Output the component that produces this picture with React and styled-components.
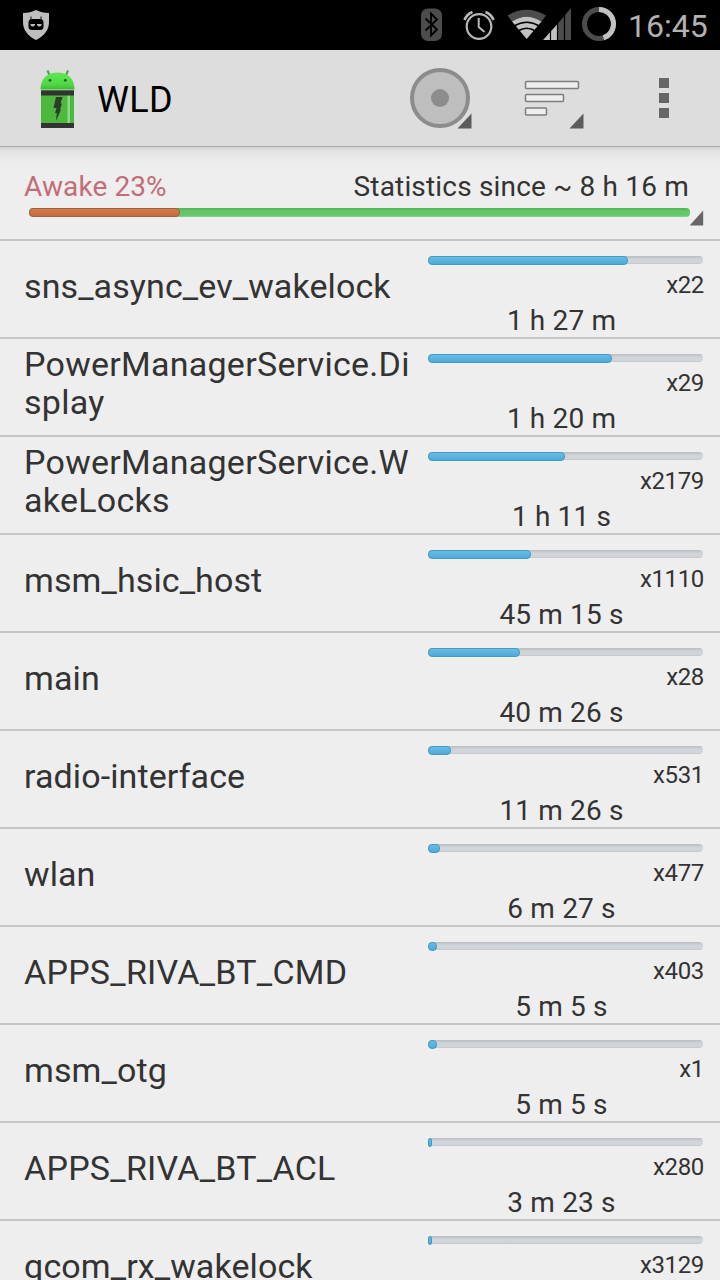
import styled, { createGlobalStyle } from "styled-components";

const GlobalStyle = createGlobalStyle`
  * {
    box-sizing: border-box;
  }

  body {
    margin: 0;
    background: #eee;
    font-family: Roboto, "Noto Sans", sans-serif;
    color: #333;
    overflow: hidden;
  }

  svg {
    display: block;
  }
`;

const Screen = styled.div`
  display: flex;
  flex-direction: column;
  width: 720px;
  height: 1280px;
  overflow: hidden;
`;

const StatusBar = styled.div`
  display: flex;
  align-items: center;
  justify-content: space-between;
  flex: none;
  height: 50px;
  padding: 0 12px 0 22px;
  background: #000;
`;

const StatusIcons = styled.div`
  display: flex;
  align-items: center;
`;

const Clock = styled.span`
  width: 80px;
  margin-left: 10px;
  font-size: 32px;
  line-height: 50px;
  padding-top: 2px;
  white-space: nowrap;
  color: #b2b2b2;
`;

const ActionBar = styled.header`
  display: flex;
  align-items: center;
  flex: none;
  height: 97px;
  padding-left: 40px;
  background: #ddd;
  border-bottom: 1px solid #aaa;
`;

const Title = styled.h1`
  flex: 1;
  margin: 0 0 0 22px;
  padding-top: 4px;
  font-size: 36px;
  font-weight: 400;
  letter-spacing: 0.3px;
  color: #000;
`;

const ActionButton = styled.button`
  width: 112px;
  height: 96px;
  padding: 0;
  border: none;
  background: none;
`;

const Summary = styled.section`
  flex: none;
  height: 94px;
  padding: 22px 16px 0 24px;
  border-bottom: 2px solid #c6c6c6;
  background: linear-gradient(#d2d2d2, #e4e4e4 4px, #eee 18px);
`;

const SummaryText = styled.div`
  display: flex;
  justify-content: space-between;
  padding-right: 15px;
  font-size: 28px;
  line-height: 36px;
  letter-spacing: 0.18px;
`;

const Awake = styled.span`
  letter-spacing: 0.1px;
  color: #c26d78;
`;

const SummaryProgress = styled.div`
  display: flex;
  padding-left: 5px;
`;

const SummaryTrack = styled.div`
  width: 662px;
  height: 9px;
  margin-top: 3px;
  border-radius: 4px;
  background: linear-gradient(#50b455, #66c66a 35%, #66c66a 80%, #8fd292);
`;

const Fill = styled.div`
  height: 100%;
  border-radius: 4px;
`;

const AwakeFill = styled(Fill)`
  border: 1px solid #a0623a;
  background: linear-gradient(#d07c50, #cf7145 60%, #c26a40);
`;

const Row = styled.li`
  display: grid;
  grid-template-columns: 396px 284px;
  height: 98px;
  padding-left: 24px;
  border-bottom: 2px solid #c6c6c6;
`;

const List = styled.ul`
  margin: 0;
  padding: 0;
  list-style: none;
`;

const Name = styled.div`
  align-self: center;
  margin-bottom: ${(props) => (props.$wrapped ? "8px" : "6px")};
  font-size: 34px;
  line-height: 38px;
  letter-spacing: ${(props) => (props.$capitals ? "0.26px" : "0.1px")};
  word-break: break-all;
`;

const Usage = styled.div`
  padding-top: 15px;
`;

const Track = styled.div`
  width: 275px;
  height: 8px;
  margin-left: 8px;
  border-radius: 4px;
  background: linear-gradient(#b9bdc1, #d0d5da 40%, #d0d5da 80%, #c2c5c8);
`;

const UsageFill = styled(Fill)`
  height: 9px;
  border: 1px solid #3d9cc8;
  background: linear-gradient(#6dbbe2, #5cb3df 50%, #4ea9d7);
`;

const Count = styled.div`
  height: 41px;
  font-size: 24px;
  line-height: 42px;
  letter-spacing: -0.35px;
  text-align: right;
`;

const Duration = styled.div`
  padding-right: 1px;
  font-size: 28px;
  line-height: 32px;
  letter-spacing: 0.15px;
  text-align: center;
`;

const LINE_CHARS = 22;

const wakelocks = [
  { name: "sns_async_ev_wakelock", count: 22, time: "1 h 27 m", fill: 200 },
  { name: "PowerManagerService.Display", count: 29, time: "1 h 20 m", fill: 184 },
  { name: "PowerManagerService.WakeLocks", count: 2179, time: "1 h 11 s", fill: 137 },
  { name: "msm_hsic_host", count: 1110, time: "45 m 15 s", fill: 103 },
  { name: "main", count: 28, time: "40 m 26 s", fill: 92 },
  { name: "radio-interface", count: 531, time: "11 m 26 s", fill: 23 },
  { name: "wlan", count: 477, time: "6 m 27 s", fill: 12 },
  { name: "APPS_RIVA_BT_CMD", count: 403, time: "5 m 5 s", fill: 9 },
  { name: "msm_otg", count: 1, time: "5 m 5 s", fill: 9 },
  { name: "APPS_RIVA_BT_ACL", count: 280, time: "3 m 23 s", fill: 4 },
  { name: "qcom_rx_wakelock", count: 3129, fill: 4 },
];

function ShieldIcon() {
  return (
    <svg width="28" height="32" viewBox="0 0 28 32">
      <path d="M14 1C10 3 6 4 1 4v9c0 8 5 14 13 18 8-4 13-10 13-18V4C22 4 18 3 14 1z" fill="#bebebe" />
      <path d="M9 7.500v4M19 7.500v4" stroke="#444" strokeWidth="1.400" />
      <rect x="6.500" y="10" width="15" height="11" rx="3.500" fill="#000" />
      <path d="M8.500 15h4.500v1q-1 1.500-2.200 1.500T8.500 16zM15 15h4.500v1q-1 1.500-2.200 1.500T15 16z" fill="#bebebe" />
    </svg>
  );
}

function SystemIcons() {
  return (
    <svg width="200" height="50" viewBox="418 0 200 50">
      <rect x="421" y="8.500" width="21" height="32.500" rx="7" fill="#4c4c4c" />
      <path d="M425.500 18.500l11.500 11-6 6V13.500l6 6-11.500 11" fill="none" stroke="#000" strokeWidth="1.800" />
      <g fill="none" stroke="#b8b8b8">
        <circle cx="479" cy="26.500" r="12.300" strokeWidth="2.200" />
        <path d="M478.700 18v9l5.800 5" strokeWidth="2" />
        <path d="M464.500 20q2-5.500 8-8M493.500 20q-2-5.500-8-8" strokeWidth="2.600" />
      </g>
      <path d="M507.500 15.500Q526.500 4 546 15.500l-4.500 6Q526.500 12 512 21.500z" fill="#4c4c4c" />
      <path d="M526.700 39L512 21.500Q526.500 12 541.500 21.500z" fill="#c2c2c2" />
      <path d="M514 26q12.700-7.500 25.400 0M518 31q8.700-5.500 17.400 0" fill="none" stroke="#000" strokeWidth="1.500" />
      <path d="M543 40l14.500-16v16z" fill="#c2c2c2" />
      <path d="M557.500 24L571 8v32h-13.500z" fill="#4c4c4c" />
      <path d="M550.500 20v20M557.500 10v30M564.500 10v30" stroke="#000" strokeWidth="1.200" />
      <circle cx="599" cy="24" r="14.500" fill="none" stroke="#4c4c4c" strokeWidth="5" />
      <path d="M599 9.500a14.500 14.500 0 0 1 4.500 28.300" fill="none" stroke="#c2c2c2" strokeWidth="5" />
    </svg>
  );
}

function AppLogo() {
  return (
    <svg width="35" height="60" viewBox="40 68 35 60">
      <defs>
        <linearGradient id="head" x1="0" y1="0" x2="0" y2="1">
          <stop offset="0" stopColor="#5fe652" />
          <stop offset="0.700" stopColor="#50d847" />
          <stop offset="1" stopColor="#40b838" />
        </linearGradient>
      </defs>
      <path d="M47.500 70.500l2.500 6M68 70.500l-2.500 6" stroke="#46a340" strokeWidth="2" />
      <path d="M40.500 89.500C40.500 78 48 72.500 57.500 72.500S74.500 78 74.500 89.500z" fill="url(#head)" />
      <circle cx="50" cy="80.300" r="1.400" fill="#245c22" />
      <circle cx="65.300" cy="80.300" r="1.400" fill="#245c22" />
      <rect x="41" y="90" width="33" height="38" fill="#4cb83d" />
      <rect x="67.500" y="95" width="2.500" height="28" fill="#8bdc80" />
      <rect x="41" y="90.500" width="33" height="5" fill="#333" />
      <rect x="41" y="123" width="33" height="5" fill="#333" />
      <path d="M56 97h6.500l-2 6.500h1.500l-2 6h1l-5 11.500 0.800-8h-1.800l1.500-5h-3z" fill="#2d3b2b" />
    </svg>
  );
}

function RecordIcon() {
  return (
    <svg width="112" height="96" viewBox="384 50 112 96">
      <circle cx="440" cy="98" r="28" fill="#bebebe" stroke="#8c8c8c" strokeWidth="4" />
      <circle cx="440" cy="98" r="9" fill="#8c8c8c" />
      <path d="M471.500 113.500v15h-14z" fill="#5c5c5c" />
    </svg>
  );
}

function SortIcon() {
  return (
    <svg width="112" height="96" viewBox="496 50 112 96">
      <g fill="#eee" stroke="#7d7d7d" strokeWidth="1.500">
        <rect x="525.500" y="81.500" width="53" height="7" rx="1" />
        <rect x="525.500" y="94.500" width="38" height="7" rx="1" />
        <rect x="525.500" y="108" width="21" height="7" rx="1" />
      </g>
      <path d="M583.500 113.500v15h-14z" fill="#5c5c5c" />
    </svg>
  );
}

function OverflowIcon() {
  return (
    <svg width="112" height="96" viewBox="608 50 112 96" fill="#666">
      <rect x="659" y="78" width="10" height="10" />
      <rect x="659" y="93" width="10" height="10" />
      <rect x="659" y="108" width="10" height="10" />
    </svg>
  );
}

function SpinnerCorner() {
  return (
    <svg width="14" height="21" viewBox="0 0 14 21">
      <path d="M13.200 5.500v15H-0.500z" fill="#666" />
    </svg>
  );
}

function WakelockRow({ wakelock }) {
  return (
    <Row>
      <Name
        $wrapped={wakelock.name.length > LINE_CHARS}
        $capitals={/[A-Z]/.test(wakelock.name)}
      >
        {wakelock.name}
      </Name>
      <Usage>
        <Track>
          <UsageFill style={{ width: wakelock.fill }} />
        </Track>
        <Count>x{wakelock.count}</Count>
        {wakelock.time && <Duration>{wakelock.time}</Duration>}
      </Usage>
    </Row>
  );
}

export default function App() {
  return (
    <Screen>
      <GlobalStyle />
      <StatusBar>
        <ShieldIcon />
        <StatusIcons>
          <SystemIcons />
          <Clock>16:45</Clock>
        </StatusIcons>
      </StatusBar>

      <ActionBar>
        <AppLogo />
        <Title>WLD</Title>
        <ActionButton aria-label="Record">
          <RecordIcon />
        </ActionButton>
        <ActionButton aria-label="Sort">
          <SortIcon />
        </ActionButton>
        <ActionButton aria-label="More options">
          <OverflowIcon />
        </ActionButton>
      </ActionBar>

      <Summary>
        <SummaryText>
          <Awake>Awake 23%</Awake>
          <span>Statistics since ~ 8 h 16 m</span>
        </SummaryText>
        <SummaryProgress>
          <SummaryTrack>
            <AwakeFill style={{ width: 151 }} />
          </SummaryTrack>
          <SpinnerCorner />
        </SummaryProgress>
      </Summary>

      <List>
        {wakelocks.map((wakelock) => (
          <WakelockRow key={wakelock.name} wakelock={wakelock} />
        ))}
      </List>
    </Screen>
  );
}
